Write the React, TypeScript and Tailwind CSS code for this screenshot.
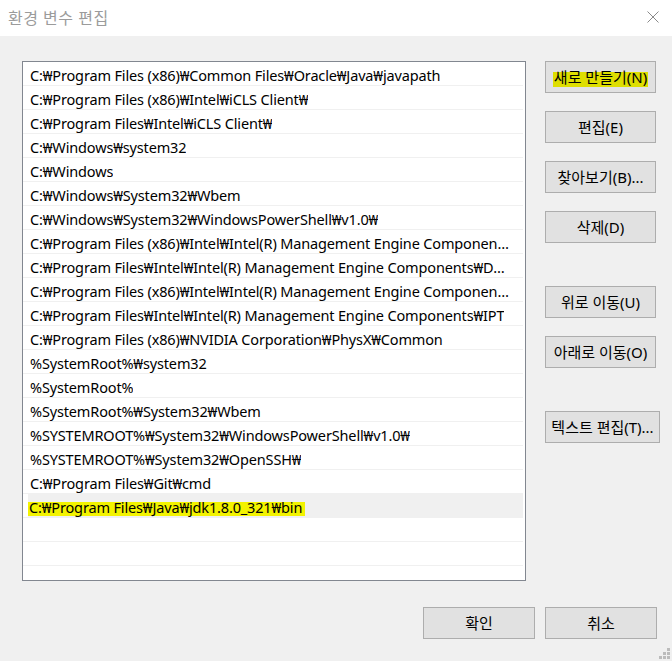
import React from "react";

const W = "\u20A9";
const items = [
  `C:${W}Program Files (x86)${W}Common Files${W}Oracle${W}Java${W}javapath`,
  `C:${W}Program Files (x86)${W}Intel${W}iCLS Client${W}`,
  `C:${W}Program Files${W}Intel${W}iCLS Client${W}`,
  `C:${W}Windows${W}system32`,
  `C:${W}Windows`,
  `C:${W}Windows${W}System32${W}Wbem`,
  `C:${W}Windows${W}System32${W}WindowsPowerShell${W}v1.0${W}`,
  `C:${W}Program Files (x86)${W}Intel${W}Intel(R) Management Engine Components${W}DAL`,
  `C:${W}Program Files${W}Intel${W}Intel(R) Management Engine Components${W}DAL`,
  `C:${W}Program Files (x86)${W}Intel${W}Intel(R) Management Engine Components${W}IPT`,
  `C:${W}Program Files${W}Intel${W}Intel(R) Management Engine Components${W}IPT`,
  `C:${W}Program Files (x86)${W}NVIDIA Corporation${W}PhysX${W}Common`,
  `%SystemRoot%${W}system32`,
  `%SystemRoot%`,
  `%SystemRoot%${W}System32${W}Wbem`,
  `%SYSTEMROOT%${W}System32${W}WindowsPowerShell${W}v1.0${W}`,
  `%SYSTEMROOT%${W}System32${W}OpenSSH${W}`,
  `C:${W}Program Files${W}Git${W}cmd`,
];
const selected = `C:${W}Program Files${W}Java${W}jdk1.8.0_321${W}bin`;

const font = { fontFamily: '"Noto Sans", "Noto Sans CJK KR", sans-serif' };

function Btn({ children, className = "" }: { children: React.ReactNode; className?: string }) {
  return (
    <div
      className={`h-[32px] flex items-center justify-center bg-[#e1e1e1] border border-[#adadad] text-[15px] text-black whitespace-nowrap ${className}`}
    >
      {children}
    </div>
  );
}

export default function App() {
  return (
    <div
      className="relative w-[672px] h-[661px] bg-[#f0f0f0] flex flex-col overflow-hidden"
      style={font}
    >
      <div className="h-[36px] bg-white flex items-center justify-between pl-[8px] pr-[13px] shrink-0">
        <span className="text-[16px] text-[#9b9b9b] tracking-[0.5px] mt-[-1px]">환경 변수 편집</span>
        <svg width="12" height="12" viewBox="0 0 12 12" className="mt-[-2px]">
          <path d="M0.5 0.5 L11.5 11.5 M11.5 0.5 L0.5 11.5" stroke="#8a8a8a" strokeWidth="1" />
        </svg>
      </div>
      <div className="flex pl-[22px] pt-[25px]">
        <div className="w-[504px] h-[520px] bg-white border border-[#828790] overflow-hidden">
          {items.map((t, i) => (
            <div key={i} className="h-[24px] border-b border-[#f0f0f0] mr-[2px] flex items-center pl-[7px] pr-[14px] pt-[3px]">
              <span className="truncate text-[14.5px] tracking-[-0.15px] text-black leading-[20px]">{t}</span>
            </div>
          ))}
          <div className="h-[24px] border-b border-[#f0f0f0] mr-[2px] flex">
            <div className="ml-[5px] flex-1 bg-[#f0f0f0] flex items-center pl-[1px] pt-[3px]">
              <span className="relative text-[14.5px] tracking-[-0.15px] text-black leading-[20px]">
                <span className="absolute left-[-1px] right-[-3px] top-[5px] bottom-[1px] bg-[#f3f300]"></span>
                <span className="relative">{selected}</span>
              </span>
            </div>
          </div>
          <div className="h-[24px] border-b border-[#f0f0f0] mr-[2px]" />
          <div className="h-[24px] border-b border-[#f0f0f0] mr-[2px]" />
        </div>
        <div className="ml-[19px] flex flex-col">
          <Btn className="w-[111px]">
            <span className="relative">
              <span className="absolute left-[-1px] right-[-1px] top-[6px] bottom-[1px] bg-[#dede00]"></span>
              <span className="relative">새로 만들기(N)</span>
            </span>
          </Btn>
          <Btn className="w-[111px] mt-[18px]">편집(E)</Btn>
          <Btn className="w-[111px] mt-[18px]">찾아보기(B)...</Btn>
          <Btn className="w-[111px] mt-[18px]">삭제(D)</Btn>
          <Btn className="w-[111px] mt-[43px]">위로 이동(U)</Btn>
          <Btn className="w-[111px] mt-[18px]">아래로 이동(O)</Btn>
          <Btn className="w-[115px] mt-[43px]">텍스트 편집(T)...</Btn>
        </div>
      </div>
      <div className="flex justify-end gap-[10px] pr-[15px] mt-[26px]">
        <Btn className="w-[112px]">확인</Btn>
        <Btn className="w-[112px]">취소</Btn>
      </div>
      <svg width="12" height="12" viewBox="0 0 12 12" className="absolute right-[1px] bottom-[1px]">
        <rect x="8" y="0" width="3" height="3" fill="#bcbcbc" />
        <rect x="4" y="4" width="3" height="3" fill="#bcbcbc" />
        <rect x="8" y="4" width="3" height="3" fill="#bcbcbc" />
        <rect x="0" y="8" width="3" height="3" fill="#bcbcbc" />
        <rect x="4" y="8" width="3" height="3" fill="#bcbcbc" />
        <rect x="8" y="8" width="3" height="3" fill="#bcbcbc" />
      </svg>
    </div>
  );
}
